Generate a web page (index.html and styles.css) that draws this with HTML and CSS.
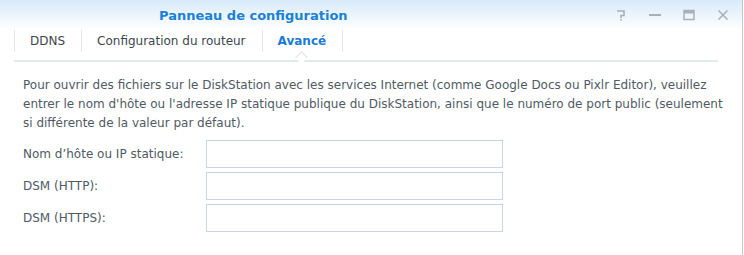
FILE: index.html
```html
<!DOCTYPE html>
<html lang="fr">
<head>
    <meta charset="UTF-8">
    <meta name="viewport" content="width=device-width, initial-scale=1.0">
    <title>Panneau de configuration</title>
    <link rel="stylesheet" href="styles.css">
</head>
<body>
    <div class="window">
        <div class="titlebar">
            <span class="title">Panneau de configuration</span>
            <div class="controls">
                <svg width="14" height="14" viewBox="0 0 14 14"><path d="M3 3 H10 V7.5 H7 V10" fill="none" stroke="#a8b0b8" stroke-width="1.6"/><rect x="6.2" y="11" width="1.6" height="1.6" fill="#a8b0b8"/></svg>
                <svg width="14" height="14" viewBox="0 0 14 14"><rect x="1" y="6" width="12" height="2" fill="#a8b0b8"/></svg>
                <svg width="14" height="14" viewBox="0 0 14 14"><rect x="2" y="2.5" width="10" height="9" fill="none" stroke="#a8b0b8" stroke-width="1.5"/><rect x="2" y="2.5" width="10" height="3" fill="#a8b0b8"/></svg>
                <svg width="14" height="14" viewBox="0 0 14 14"><path d="M2.5 2.5 L11.5 11.5 M11.5 2.5 L2.5 11.5" stroke="#a8b0b8" stroke-width="1.5"/></svg>
            </div>
        </div>
        <div class="tabs">
            <div class="tab">DDNS</div>
            <div class="tab">Configuration du routeur</div>
            <div class="tab active">Avancé</div>
        </div>
        <div class="content">
            <p class="intro">Pour ouvrir des fichiers sur le DiskStation avec les services Internet (comme Google Docs ou Pixlr Editor), veuillez entrer le nom d'hôte ou l'adresse IP statique publique du DiskStation, ainsi que le numéro de port public (seulement si différente de la valeur par défaut).</p>
            <div class="form">
                <label for="host">Nom d’hôte ou IP statique:</label>
                <input type="text" id="host">
                <label for="http">DSM (HTTP):</label>
                <input type="text" id="http">
                <label for="https">DSM (HTTPS):</label>
                <input type="text" id="https">
            </div>
        </div>
    </div>
</body>
</html>
```

FILE: styles.css
```css
body {
    margin: 0;
    padding: 0;
    background-color: #fff;
    font-family: "DejaVu Sans", Verdana, sans-serif;
    font-size: 12px;
    color: #505a64;
}

.window {
    width: 742px;
    height: 255px;
    border-right: 1px solid #c4c8cc;
    background-color: #fff;
}

.titlebar {
    height: 30px;
    display: flex;
    align-items: center;
    padding-left: 159px;
    background: linear-gradient(#d8eaf9, #ffffff);
}

.title {
    font-size: 13px;
    font-weight: bold;
    color: #1a82d6;
}

.controls {
    margin-left: auto;
    margin-right: 12px;
    display: flex;
    gap: 20px;
}

.tabs {
    display: flex;
    margin: 0 24px 0 14px;
    height: 30px;
    border-bottom: 2px solid #e6e9ec;
    position: relative;
}

.tab {
    height: 22px;
    line-height: 22px;
    padding: 0 16px 0 15px;
    border-left: 1px solid #dfe5eb;
    color: #3c4650;
    font-size: 12px;
}

.tab:last-child {
    border-right: 1px solid #dfe5eb;
}

.tab.active {
    color: #1a7ad6;
    font-weight: bold;
    position: relative;
}

.tab.active::after {
    content: "";
    position: absolute;
    left: 50%;
    bottom: -10px;
    margin-left: -5px;
    width: 8px;
    height: 8px;
    background: #fff;
    border-left: 1px solid #dcdfe2;
    border-top: 1px solid #dcdfe2;
    transform: rotate(45deg);
}

.content {
    padding: 14px 10px 0 23px;
}

.intro {
    margin: 0 0 7px 0;
    line-height: 19px;
}

.form {
    display: grid;
    grid-template-columns: 183px 297px;
    row-gap: 4px;
    align-items: center;
}

.form label {
    color: #505a64;
}

.form input {
    height: 28px;
    box-sizing: border-box;
    border: 1px solid #c9d5e2;
    padding: 0 6px;
    margin: 0;
    outline: none;
}
```
